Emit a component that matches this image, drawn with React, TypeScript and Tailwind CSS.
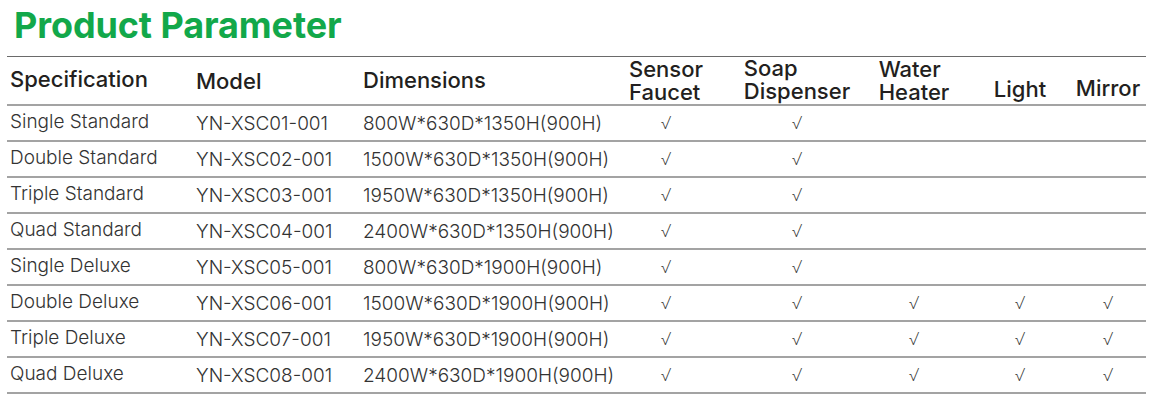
const rows = [
  ["Single Standard", "YN-XSC01-001", "800W*630D*1350H(900H)", false],
  ["Double Standard", "YN-XSC02-001", "1500W*630D*1350H(900H)", false],
  ["Triple Standard", "YN-XSC03-001", "1950W*630D*1350H(900H)", false],
  ["Quad Standard", "YN-XSC04-001", "2400W*630D*1350H(900H)", false],
  ["Single Deluxe", "YN-XSC05-001", "800W*630D*1900H(900H)", false],
  ["Double Deluxe", "YN-XSC06-001", "1500W*630D*1900H(900H)", true],
  ["Triple Deluxe", "YN-XSC07-001", "1950W*630D*1900H(900H)", true],
  ["Quad Deluxe", "YN-XSC08-001", "2400W*630D*1900H(900H)", true],
] as const;

const cols =
  "grid grid-cols-[186px_167px_246px_120px_142px_92px_120px_56px_1fr]";

function Check({ show }: { show: boolean }) {
  return (
    <div className="flex justify-center pt-[2px] text-[17px] font-extralight text-[#333]">
      {show ? "√" : ""}
    </div>
  );
}

export default function App() {
  return (
    <div
      className="w-[1158px] h-[408px] bg-white pl-[7px] pr-[12px] pt-[3px]"
      style={{ fontFamily: "Inter, 'Noto Sans', sans-serif" }}
    >
      {/* Title */}
      <h1 className="pl-[7px] text-[36px] font-bold leading-[44px] text-[#12a84a] tracking-[-0.1px]">
        Product Parameter
      </h1>

      {/* Table */}
      <div className="mt-[9px] border-t-[1.5px] border-[#6a6a6a]">
        {/* Header */}
        <div
          className={`${cols} h-[49px] border-b-2 border-[#a3a3a3] text-[22px] font-medium text-[#231f20] leading-[23px]`}
        >
          <div className="pl-[3px] pt-[11px]">Specification</div>
          <div className="pl-[3px] pt-[13px]">Model</div>
          <div className="pl-[3px] pt-[12px]">Dimensions</div>
          <div className="flex justify-center pt-[1px]">
            <div>
              Sensor
              <br />
              Faucet
            </div>
          </div>
          <div className="flex justify-center pt-0">
            <div>
              Soap
              <br />
              Dispenser
            </div>
          </div>
          <div className="flex justify-center pt-[1px]">
            <div>
              Water
              <br />
              Heater
            </div>
          </div>
          <div className="flex justify-center pt-[21px]">Light</div>
          <div className="flex justify-center pt-[20px]">Mirror</div>
          <div />
        </div>

        {/* Body */}
        {rows.map(([spec, model, dim, deluxe]) => (
          <div
            key={model}
            className={`${cols} h-[36px] items-center border-b-2 border-[#a3a3a3] text-[19px] font-light text-[#333]`}
          >
            <div className="pl-[3px] -mt-[1px]">{spec}</div>
            <div className="pl-[3px] pt-[2px]">{model}</div>
            <div className="pl-[3px] pt-[2px]">{dim}</div>
            <Check show />
            <Check show />
            <Check show={deluxe} />
            <Check show={deluxe} />
            <Check show={deluxe} />
            <div />
          </div>
        ))}
      </div>
    </div>
  );
}
